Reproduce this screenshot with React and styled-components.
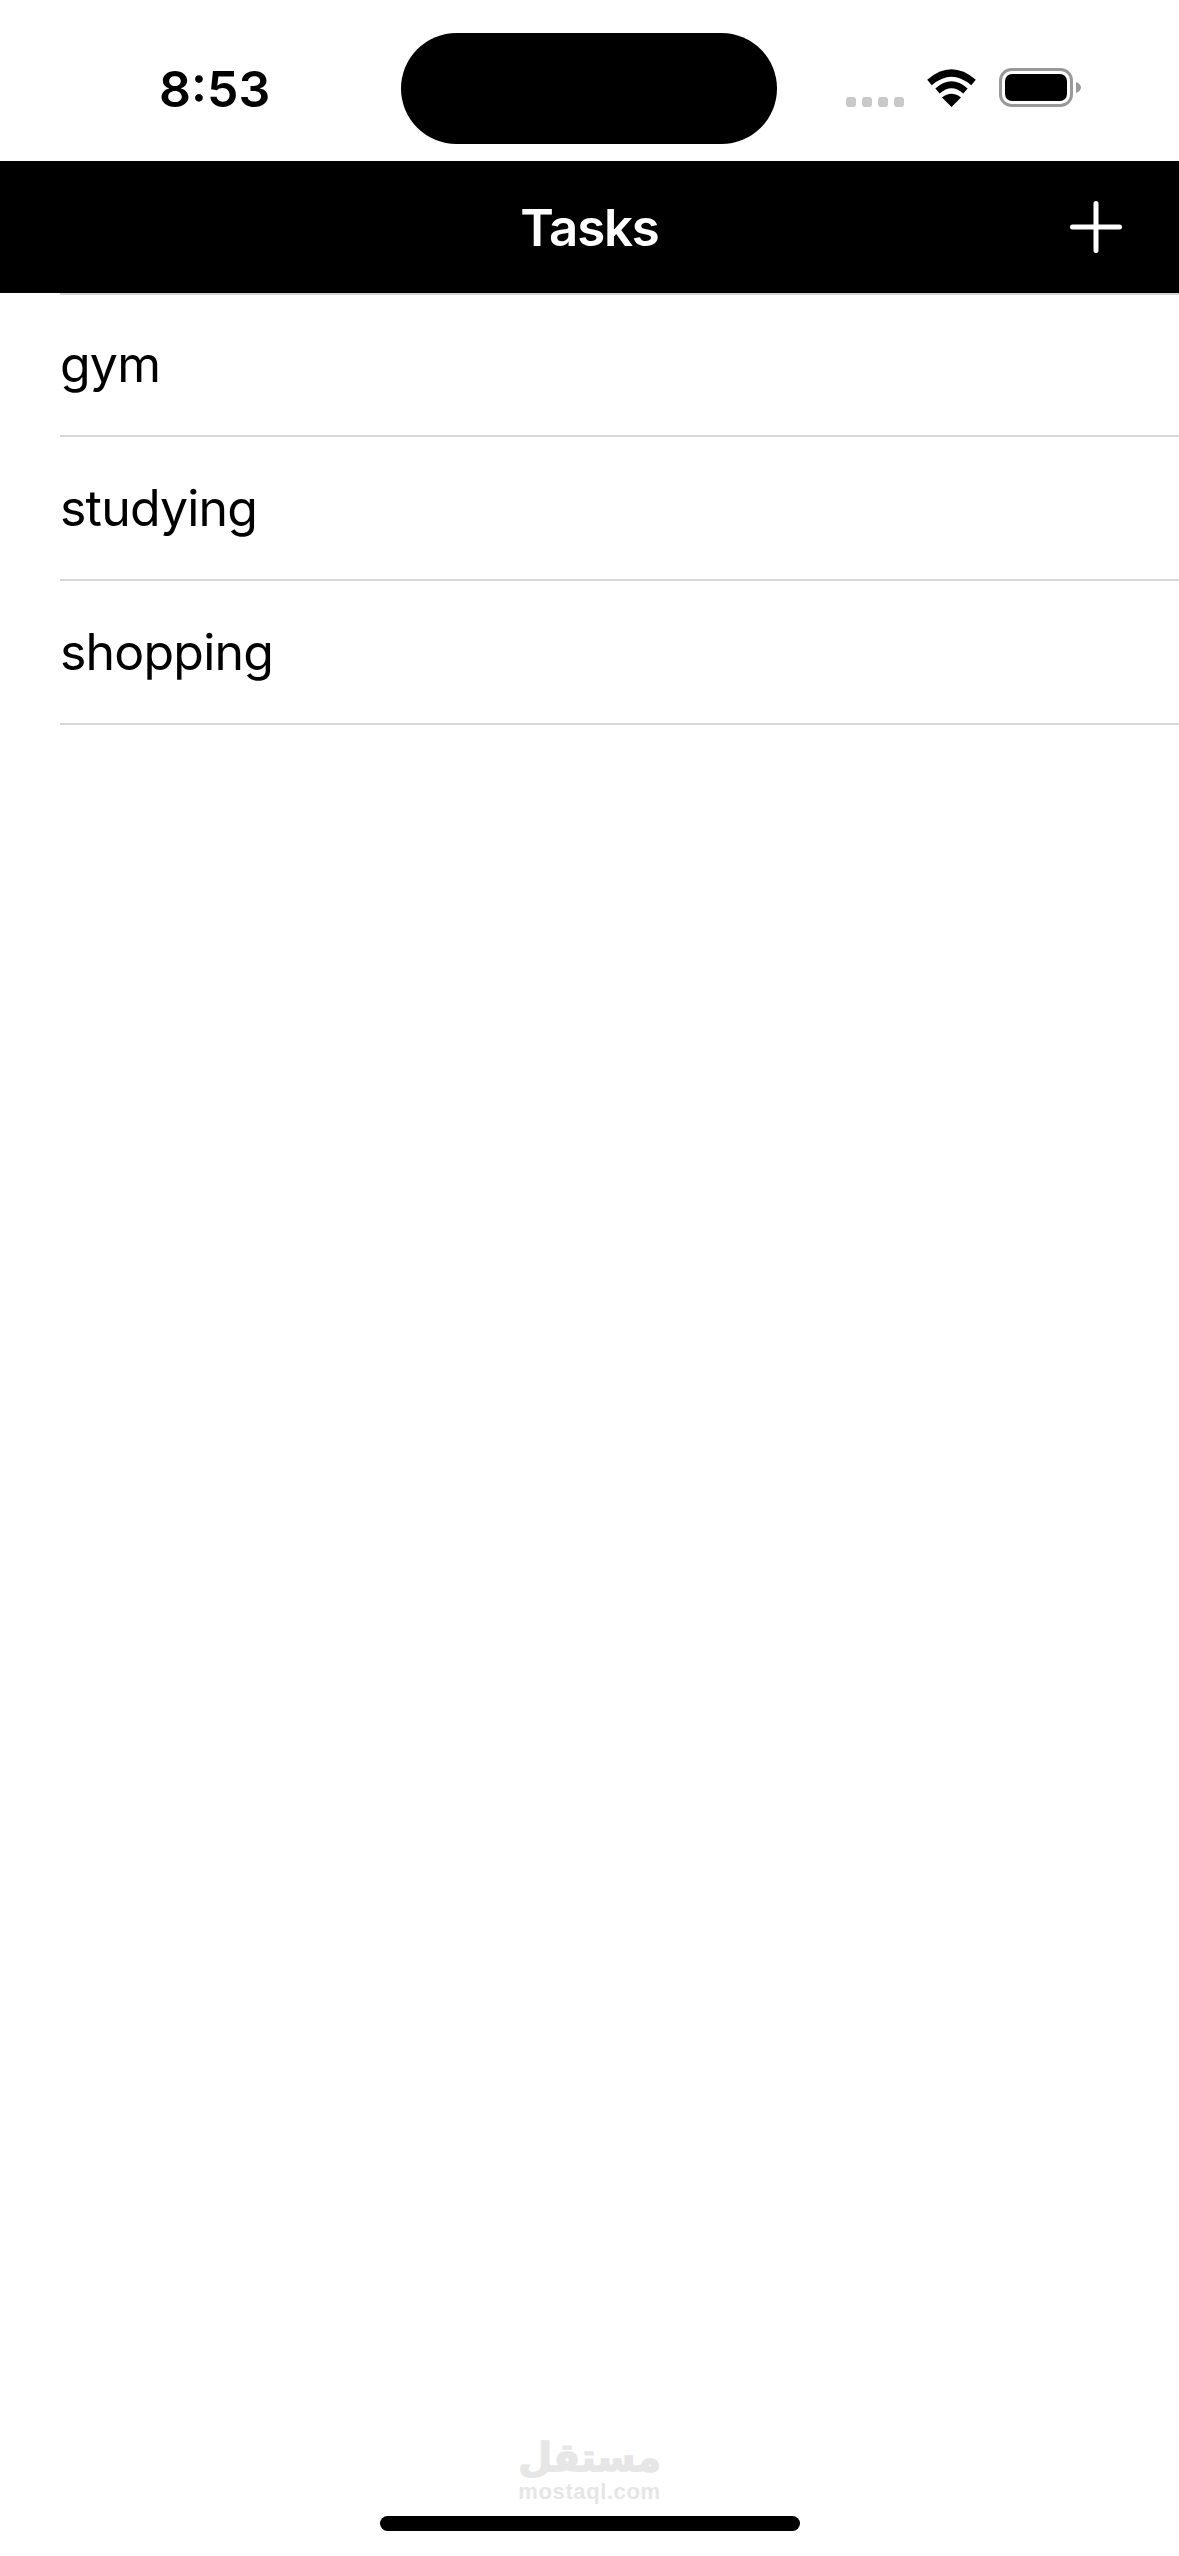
import React from 'react'
import styled, { createGlobalStyle } from "styled-components";

const tasks = ["gym", "studying", "shopping"];

const GlobalStyle = createGlobalStyle`
  html, body {
    margin: 0;
    padding: 0;
    background: #fff;
  }
  * {
    box-sizing: border-box;
  }
`

const Page = styled.div`
  position: relative;
  display: flex;
  flex-direction: column;
  width: 1179px;
  height: 2556px;
  overflow: hidden;
  background: #fff;
  color: #000;
  font-family: Inter, "Liberation Sans", sans-serif;
`

const StatusBar = styled.div`
  display: grid;
  grid-template-columns: 401px 376px 1fr;
  align-items: center;
  height: 161px;
  padding-top: 16px;
`

const Time = styled.div`
  padding-left: 159px;
  font-size: 50px;
  font-weight: 600;
  letter-spacing: 0;
`

const Island = styled.div`
  height: 111px;
  border-radius: 56px;
  background: #000;
`

const StatusIcons = styled.div`
  display: flex;
  align-items: flex-end;
  height: 39px;
  margin-top: -2px;
  padding-left: 69px;
`

const Dots = styled.div`
  display: flex;
  gap: 6px;
  margin-right: 22px;
`

const Dot = styled.span`
  width: 10px;
  height: 10px;
  border-radius: 3px;
  background: #c9c9c9;
`

const Battery = styled.svg`
  margin-left: 22px;
`

const NavBar = styled.div`
  display: grid;
  grid-template-columns: 1fr auto 1fr;
  align-items: center;
  height: 132px;
  background: #000;
  color: #fff;
`

const Title = styled.div`
  grid-column: 2;
  font-size: 51px;
  font-weight: 600;
  letter-spacing: -1.2px;
`

const AddButton = styled.svg`
  justify-self: end;
  margin-right: 57px;
`

const List = styled.div`
  flex: 1;
  padding-left: 60px;
`

const Row = styled.div`
  display: flex;
  align-items: center;
  height: 144px;
  padding-bottom: ${props => props.$first ? "2px" : "0"};
  border-top: ${props => props.$first ? "2px solid #d4d4d4" : "0"};
  border-bottom: 2px solid #d6d6d6;
  font-size: 50px;
  letter-spacing: -0.8px;
`

const Watermark = styled.div`
  position: absolute;
  left: 0;
  right: 0;
  top: 2436px;
  display: flex;
  flex-direction: column;
  align-items: center;
  color: #e6e6e6;
  font-weight: 700;
  line-height: 1;
`

const WatermarkArabic = styled.div`
  font-family: "DejaVu Sans", sans-serif;
  font-size: 39px;
  line-height: 44px;
  -webkit-text-stroke: 1.5px #e6e6e6;
`

const WatermarkLatin = styled.div`
  margin-top: 1px;
  font-family: "Liberation Sans", sans-serif;
  font-size: 22px;
  letter-spacing: 0.6px;
`

const HomeBar = styled.div`
  align-self: center;
  width: 420px;
  height: 15px;
  margin-bottom: 25px;
  border-radius: 8px;
  background: #000;
`

const App = () => {
  return (
    <Page>
      <GlobalStyle />
      <StatusBar>
        <Time>8:53</Time>
        <Island />
        <StatusIcons>
          <Dots>
            <Dot /><Dot /><Dot /><Dot />
          </Dots>
          <svg width="51" height="38" viewBox="0 0 51 38" fill="none">
            <path d="M3.5 13.5 Q25.5 -5.5 47.5 13.5" stroke="#000" strokeWidth="7" />
            <path d="M11.5 22 Q25.5 9.5 39.5 22" stroke="#000" strokeWidth="6.5" />
            <path d="M25.5 38 L16 28.5 Q25.5 21 35 28.5 Z" fill="#000" />
          </svg>
          <Battery width="83" height="39" viewBox="0 0 83 39" fill="none">
            <rect x="1.5" y="1.5" width="71" height="36" rx="11" stroke="#999" strokeWidth="3" />
            <rect x="6" y="6" width="62" height="27" rx="7" fill="#000" />
            <path d="M77 14 C80 15 82 17 82 19.5 C82 22 80 24 77 25 Z" fill="#999" />
          </Battery>
        </StatusIcons>
      </StatusBar>

      <NavBar>
        <Title>Tasks</Title>
        <AddButton width="52" height="52" viewBox="0 0 52 52" fill="none">
          <path d="M26 2.5 V49.5 M2.5 26 H49.5" stroke="#fff" strokeWidth="5" strokeLinecap="round" />
        </AddButton>
      </NavBar>

      <List>
        {tasks.map((val, index) => (
          <Row key={val} $first={index === 0}>{val}</Row>
        ))}
      </List>

      <Watermark>
        <WatermarkArabic>مستقل</WatermarkArabic>
        <WatermarkLatin>mostaql.com</WatermarkLatin>
      </Watermark>

      <HomeBar />
    </Page>
  );
}

export default App
